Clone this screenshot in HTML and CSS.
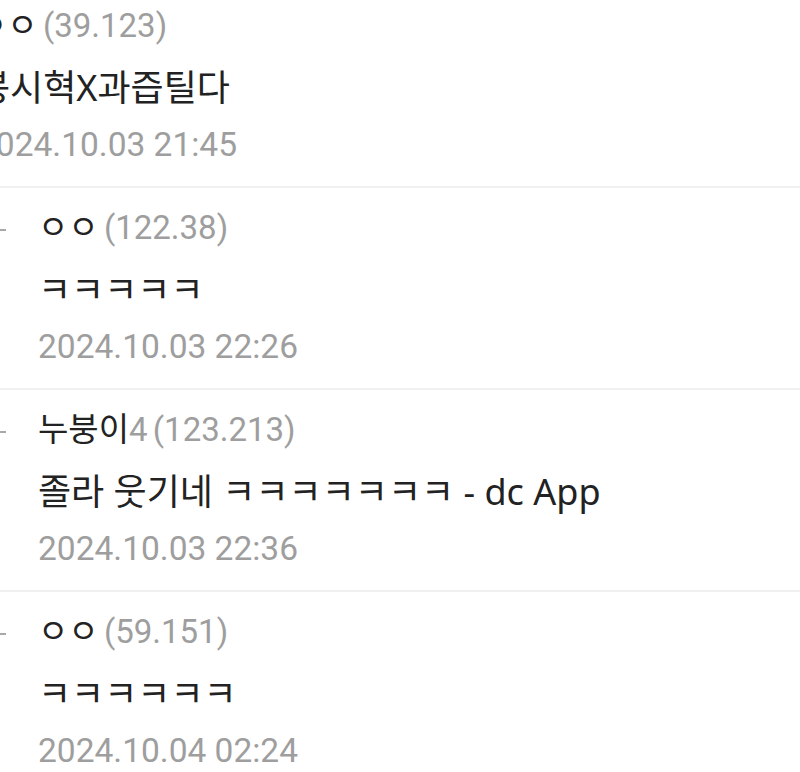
FILE: index.html
```html
<!DOCTYPE html>
<html lang="ko">

<head>
    <meta charset="UTF-8">
    <meta name="viewport" content="width=device-width, initial-scale=1.0">
    <title>댓글</title>
    <link rel="stylesheet" href="styles.css">
</head>

<body>
    <div class="comment-list">
        <div class="comment">
            <div class="comment-head"><span class="nick">ㅇㅇ</span> <span class="ip">(39.123)</span></div>
            <div class="comment-text">봉시혁X과즙틸다</div>
            <div class="comment-date">2024.10.03 21:45</div>
        </div>
        <div class="comment reply">
            <div class="comment-head"><span class="nick">ㅇㅇ</span> <span class="ip">(122.38)</span></div>
            <div class="comment-text">ㅋㅋㅋㅋㅋ</div>
            <div class="comment-date">2024.10.03 22:26</div>
        </div>
        <div class="comment reply">
            <div class="comment-head"><span class="nick">누붕이</span><span class="ip">4 (123.213)</span></div>
            <div class="comment-text">졸라 웃기네 ㅋㅋㅋㅋㅋㅋㅋ - dc App</div>
            <div class="comment-date">2024.10.03 22:36</div>
        </div>
        <div class="comment reply">
            <div class="comment-head"><span class="nick">ㅇㅇ</span> <span class="ip">(59.151)</span></div>
            <div class="comment-text">ㅋㅋㅋㅋㅋㅋ</div>
            <div class="comment-date">2024.10.04 02:24</div>
        </div>
    </div>
</body>

</html>
```

FILE: styles.css
```css
body {
    margin: 0;
    background-color: #fff;
    font-family: Roboto, "Noto Sans CJK KR", sans-serif;
    overflow: hidden;
}

.comment-list {
    margin-top: -14px;
}

.comment {
    position: relative;
    box-sizing: border-box;
    height: 202px;
    padding-top: 14px;
    margin-left: -23px;
    border-bottom: 2px solid #f0f0f0;
}

.reply {
    margin-left: 0;
    padding-left: 38px;
}

/* reply marker, mostly cut off at the left edge */
.reply::before {
    content: "";
    position: absolute;
    left: -4px;
    top: 41px;
    width: 10px;
    height: 2px;
    background-color: #a8a8a8;
}

.comment-head {
    height: 52px;
    line-height: 52px;
    font-size: 33px;
    word-spacing: -3px;
    white-space: nowrap;
}

.nick {
    color: #222;
}

.ip {
    color: #9e9e9e;
}

.comment-text {
    height: 72px;
    line-height: 72px;
    font-family: "Noto Sans", "Noto Sans CJK KR", sans-serif;
    font-size: 36px;
    color: #222;
    white-space: nowrap;
}

.comment-date {
    height: 42px;
    line-height: 42px;
    font-size: 33.5px;
    color: #9e9e9e;
}
```
